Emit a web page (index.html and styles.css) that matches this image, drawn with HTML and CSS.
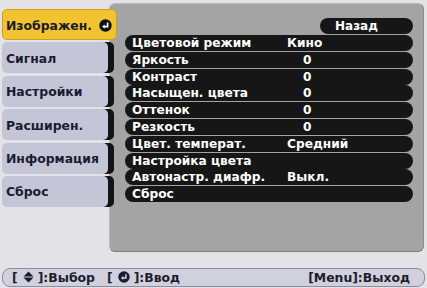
FILE: index.html
```html
<!DOCTYPE html>
<html lang="ru">
<head>
<meta charset="utf-8">
<link rel="stylesheet" href="styles.css">
</head>
<body>
<div class="screen">
  <div class="top">
    <div class="tabs">
      <div class="tab active"><span>Изображен.</span>
        <svg class="enter" width="13" height="13" viewBox="0 0 13 13"><circle cx="6.5" cy="6.5" r="6.2" fill="#111"/><path d="M8.6 3.4 V7.6 H5.2" fill="none" stroke="#fff" stroke-width="1.6"/><path d="M3.2 7.6 L5.6 5.4 L5.6 9.8 Z" fill="#fff"/></svg>
      </div>
      <div class="tab">Сигнал</div>
      <div class="tab">Настройки</div>
      <div class="tab">Расширен.</div>
      <div class="tab">Информация</div>
      <div class="tab">Сброс</div>
    </div>
    <div class="panel">
      <div class="back">Назад</div>
      <div class="rows">
        <div class="row"><span class="label">Цветовой режим</span><span class="value">Кино</span></div>
        <div class="row"><span class="label">Яркость</span><span class="value num">0</span></div>
        <div class="row"><span class="label">Контраст</span><span class="value num">0</span></div>
        <div class="row"><span class="label">Насыщен. цвета</span><span class="value num">0</span></div>
        <div class="row"><span class="label">Оттенок</span><span class="value num">0</span></div>
        <div class="row"><span class="label">Резкость</span><span class="value num">0</span></div>
        <div class="row"><span class="label">Цвет. температ.</span><span class="value">Средний</span></div>
        <div class="row"><span class="label">Настройка цвета</span></div>
        <div class="row"><span class="label">Автонастр. диафр.</span><span class="value">Выкл.</span></div>
        <div class="row"><span class="label">Сброс</span></div>
      </div>
    </div>
  </div>
  <div class="bar">
    <div class="hints">
      <span>[<svg class="ud" width="11" height="12" viewBox="0 0 11 12"><path d="M5.5 0.5 L10.5 5.4 H0.5 Z M0.5 6.6 H10.5 L5.5 11.5 Z" fill="#1c1c2c"/></svg>]:Выбор</span>
      <span>[<svg class="ent" width="12" height="12" viewBox="0 0 13 13"><circle cx="6.5" cy="6.5" r="6.2" fill="#1c1c2c"/><path d="M8.6 3.4 V7.6 H5.2" fill="none" stroke="#d0d0de" stroke-width="1.6"/><path d="M3.2 7.6 L5.6 5.4 L5.6 9.8 Z" fill="#d0d0de"/></svg>]:Ввод</span>
    </div>
    <span>[Menu]:Выход</span>
  </div>
</div>
</body>
</html>
```
FILE: styles.css
```css
html, body {
  margin: 0;
  padding: 0;
}
body {
  width: 427px;
  height: 288px;
  overflow: hidden;
  background: #e3e3e7;
  font-family: "DejaVu Sans", "Liberation Sans", sans-serif;
}
.screen {
  display: flex;
  flex-direction: column;
  height: 288px;
}
.top {
  display: flex;
  height: 268px;
  padding-top: 3px;
  box-sizing: border-box;
}
.tabs {
  width: 106px;
  margin-left: 2px;
  padding-top: 6px;
  display: flex;
  flex-direction: column;
  gap: 2.4px;
  position: relative;
  z-index: 1;
  align-self: flex-start;
  background: linear-gradient(#141418, #141418) right -6px top 40px / 6px 163px no-repeat;
}
.tab {
  height: 31px;
  box-sizing: border-box;
  border-radius: 5px;
  background: #c5c5d8;
  color: #1b1b30;
  font-weight: bold;
  font-size: 12.4px;
  padding-left: 4px;
  padding-top: 1px;
  display: flex;
  align-items: center;
  box-shadow: 6px 0 0 #141418;
}
.tab.active {
  background: #f1c42f;
  border: 1px solid #c9a020;
  margin-right: -9px;
  box-shadow: none;
  justify-content: space-between;
  padding-right: 4px;
  padding-left: 3px;
  padding-top: 2px;
}
.panel {
  margin-left: 1px;
  width: 315px;
  height: 249px;
  box-sizing: border-box;
  background: #a4a4a4;
  border: 1px solid #b8b8b8;
  border-right-color: #8a8a8a;
  border-bottom-color: #7e7e7e;
  border-radius: 6px;
  padding: 14px 10px 0 15px;
  display: flex;
  flex-direction: column;
}
.back {
  align-self: flex-end;
  width: 93px;
  height: 16px;
  box-sizing: border-box;
  background: #161616;
  border-radius: 8px;
  color: #fff;
  font-weight: bold;
  font-size: 12px;
  line-height: 16px;
  padding-left: 15px;
  margin-bottom: 1px;
}
.rows {
  display: flex;
  flex-direction: column;
  gap: 0.8px;
}
.row {
  height: 16px;
  background: #161616;
  border-radius: 8px;
  color: #fff;
  font-weight: bold;
  font-size: 12.2px;
  line-height: 16px;
  display: flex;
  padding-left: 7px;
}
.label {
  width: 155px;
  flex: none;
}
.num {
  padding-left: 16px;
}
.bar {
  margin: 0 2px;
  height: 19px;
  box-sizing: border-box;
  border: 1px solid #8c8c94;
  border-radius: 8px;
  background: #d0d0de;
  display: flex;
  justify-content: space-between;
  align-items: center;
  padding: 0 14px 0 9px;
  color: #1c1c2c;
  font-size: 12.4px;
  font-weight: bold;
}
.hints {
  display: flex;
  gap: 12px;
}
.ud, .ent {
  vertical-align: -1px;
  margin: 0 4px 0 5px;
}
```
